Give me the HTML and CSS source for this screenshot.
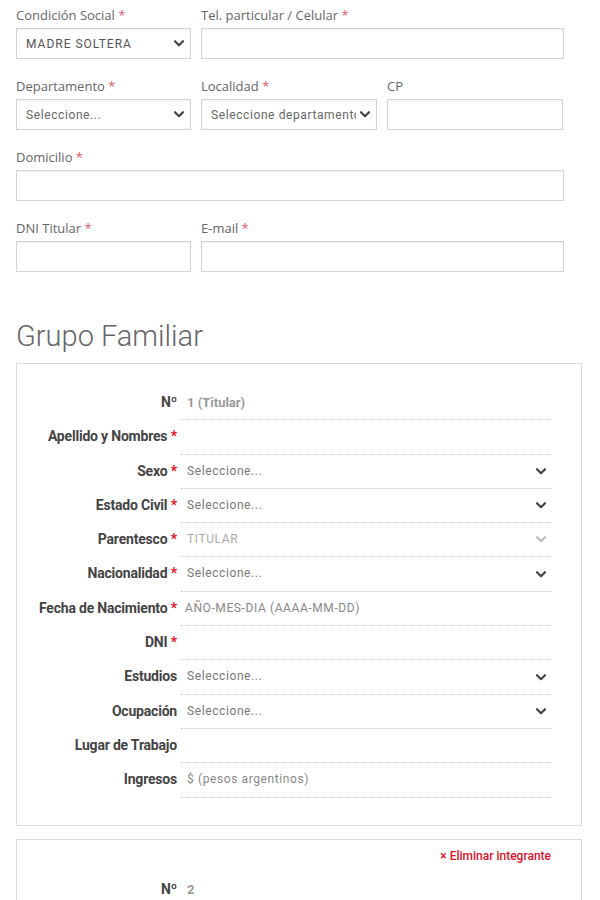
FILE: index.html
```html
<!DOCTYPE html>
<html lang="es">

<head>
  <meta charset="UTF-8">
  <meta name="viewport" content="width=device-width, initial-scale=1.0">
  <title>Inscripción - Grupo Familiar</title>
  <link rel="stylesheet" href="styles.css">
</head>

<body>

  <div class="container">
    <!-- Datos del titular -->
    <div class="form-fields">
      <div class="form-row">
        <div class="field third">
          <label>Condición Social <span class="req">*</span></label>
          <div class="select-box">
            <span class="caps">MADRE SOLTERA</span>
            <svg class="chevron" viewBox="0 0 10 7"><polyline points="1,1.2 5,5.2 9,1.2" /></svg>
          </div>
        </div>
        <div class="field two-thirds">
          <label>Tel. particular / Celular <span class="req">*</span></label>
          <div class="input-box"></div>
        </div>
      </div>

      <div class="form-row">
        <div class="field third">
          <label>Departamento <span class="req">*</span></label>
          <div class="select-box">
            <span>Seleccione...</span>
            <svg class="chevron" viewBox="0 0 10 7"><polyline points="1,1.2 5,5.2 9,1.2" /></svg>
          </div>
        </div>
        <div class="field third">
          <label>Localidad <span class="req">*</span></label>
          <div class="select-box">
            <span class="clip">Seleccione departamento</span>
            <svg class="chevron" viewBox="0 0 10 7"><polyline points="1,1.2 5,5.2 9,1.2" /></svg>
          </div>
        </div>
        <div class="field third">
          <label>CP</label>
          <div class="input-box"></div>
        </div>
      </div>

      <div class="form-row">
        <div class="field full">
          <label>Domicilio <span class="req">*</span></label>
          <div class="input-box"></div>
        </div>
      </div>

      <div class="form-row">
        <div class="field third">
          <label>DNI Titular <span class="req">*</span></label>
          <div class="input-box"></div>
        </div>
        <div class="field two-thirds">
          <label>E-mail <span class="req">*</span></label>
          <div class="input-box"></div>
        </div>
      </div>
    </div>

    <h2>Grupo Familiar</h2>

    <!-- Integrante 1 -->
    <div class="member">
      <div class="member-row">
        <div class="m-label">Nº</div>
        <div class="m-value number">1 (Titular)</div>
      </div>
      <div class="member-row">
        <div class="m-label">Apellido y Nombres <span class="req">*</span></div>
        <div class="m-value"></div>
      </div>
      <div class="member-row">
        <div class="m-label">Sexo <span class="req">*</span></div>
        <div class="m-value m-select"><span>Seleccione...</span><svg class="chevron" viewBox="0 0 10 7"><polyline points="1,1.2 5,5.2 9,1.2" /></svg></div>
      </div>
      <div class="member-row">
        <div class="m-label">Estado Civil <span class="req">*</span></div>
        <div class="m-value m-select"><span>Seleccione...</span><svg class="chevron" viewBox="0 0 10 7"><polyline points="1,1.2 5,5.2 9,1.2" /></svg></div>
      </div>
      <div class="member-row">
        <div class="m-label">Parentesco <span class="req">*</span></div>
        <div class="m-value m-select disabled"><span>TITULAR</span><svg class="chevron" viewBox="0 0 10 7"><polyline points="1,1.2 5,5.2 9,1.2" /></svg></div>
      </div>
      <div class="member-row">
        <div class="m-label">Nacionalidad <span class="req">*</span></div>
        <div class="m-value m-select"><span>Seleccione...</span><svg class="chevron" viewBox="0 0 10 7"><polyline points="1,1.2 5,5.2 9,1.2" /></svg></div>
      </div>
      <div class="member-row">
        <div class="m-label">Fecha de Nacimiento <span class="req">*</span></div>
        <div class="m-value placeholder date">AÑO-MES-DIA (AAAA-MM-DD)</div>
      </div>
      <div class="member-row">
        <div class="m-label">DNI <span class="req">*</span></div>
        <div class="m-value"></div>
      </div>
      <div class="member-row">
        <div class="m-label">Estudios</div>
        <div class="m-value m-select"><span>Seleccione...</span><svg class="chevron" viewBox="0 0 10 7"><polyline points="1,1.2 5,5.2 9,1.2" /></svg></div>
      </div>
      <div class="member-row">
        <div class="m-label">Ocupación</div>
        <div class="m-value m-select"><span>Seleccione...</span><svg class="chevron" viewBox="0 0 10 7"><polyline points="1,1.2 5,5.2 9,1.2" /></svg></div>
      </div>
      <div class="member-row">
        <div class="m-label">Lugar de Trabajo</div>
        <div class="m-value"></div>
      </div>
      <div class="member-row">
        <div class="m-label">Ingresos</div>
        <div class="m-value placeholder">$ (pesos argentinos)</div>
      </div>
    </div>

    <!-- Integrante 2 -->
    <div class="member second">
      <div class="remove-link">&times; Eliminar integrante</div>
      <div class="member-row">
        <div class="m-label">Nº</div>
        <div class="m-value number">2</div>
      </div>
    </div>
  </div>

</body>

</html>
```

FILE: styles.css
```css
/* Global Styles */
body {
  margin: 0;
  padding: 0;
  background-color: #fff;
  font-family: "Open Sans", Arial, sans-serif;
  color: #555;
}

.container {
  padding: 6px 18px 0 16px;
}

.form-fields {
  margin-right: 18px;
}

.form-row {
  display: flex;
  gap: 10px;
  margin-bottom: 18px;
}

.field {
  min-width: 0;
}

.field.third {
  flex: 0 0 176px;
}

.field.third:first-child {
  flex-basis: 175px;
}

.field.two-thirds {
  flex: 1;
}

.field.full {
  flex: 1;
}

label {
  display: block;
  font-size: 13px;
  line-height: 18px;
  color: #666;
  margin-bottom: 4px;
}

.req {
  color: #e2566a;
}

.input-box,
.select-box {
  height: 29px;
  border: 1px solid #d3d3d3;
  box-shadow: inset 0 1px 2px rgba(0, 0, 0, 0.06);
  background-color: #fff;
}

.select-box {
  display: flex;
  align-items: center;
  justify-content: space-between;
  padding: 0 6px 0 9px;
  font-family: Roboto, Arial, sans-serif;
  font-size: 12px;
  letter-spacing: 0.6px;
  color: #666;
  overflow: hidden;
}

.select-box .caps {
  letter-spacing: 1px;
  color: #555;
}

.select-box .clip {
  white-space: nowrap;
  overflow: hidden;
  flex: 1;
  min-width: 0;
  margin-right: 4px;
}

.chevron {
  width: 10px;
  height: 7px;
  flex: 0 0 10px;
  fill: none;
  stroke: #444;
  stroke-width: 2.2;
  stroke-linecap: round;
  stroke-linejoin: round;
}

h2 {
  font-family: Roboto, Arial, sans-serif;
  font-weight: 300;
  font-size: 29px;
  line-height: 34px;
  color: #666;
  margin: 47px 0 10px 0;
}

/* Grupo familiar */
.member {
  border: 1px solid #dcdcdc;
  padding: 22px 30px 27px 0;
  margin-bottom: 13px;
}

.member.second {
  padding-top: 8px;
}

.member-row {
  display: flex;
}

.m-label {
  flex: 0 0 160px;
  padding: 8px 4px 8px 0;
  text-align: right;
  font-family: Roboto, Arial, sans-serif;
  font-weight: 700;
  font-size: 14px;
  line-height: 17.3px;
  letter-spacing: -0.2px;
  color: #444;
}

.m-label .req {
  color: #e8101e;
  letter-spacing: 0;
}

.m-value {
  flex: 1;
  min-height: 17.3px;
  padding: 8px 5px 8px 6px;
  border-bottom: 1px dotted #c9c9c9;
  font-family: Roboto, Arial, sans-serif;
  font-size: 12px;
  line-height: 17.3px;
  letter-spacing: 0.6px;
  color: #777;
}

.m-select {
  display: flex;
  align-items: center;
  justify-content: space-between;
}

.m-select.disabled {
  color: #aaa;
}

.m-select.disabled .chevron {
  stroke: #bbb;
}

.m-value.placeholder {
  color: #888;
}

.m-value.date {
  padding-left: 4px;
}

.m-value.number {
  font-size: 13px;
  font-weight: 700;
  letter-spacing: 0;
  color: #999;
}

.remove-link {
  text-align: right;
  font-family: Roboto, Arial, sans-serif;
  font-size: 12px;
  font-weight: 500;
  line-height: 17px;
  color: #e0102a;
  margin-bottom: 8px;
}
```
